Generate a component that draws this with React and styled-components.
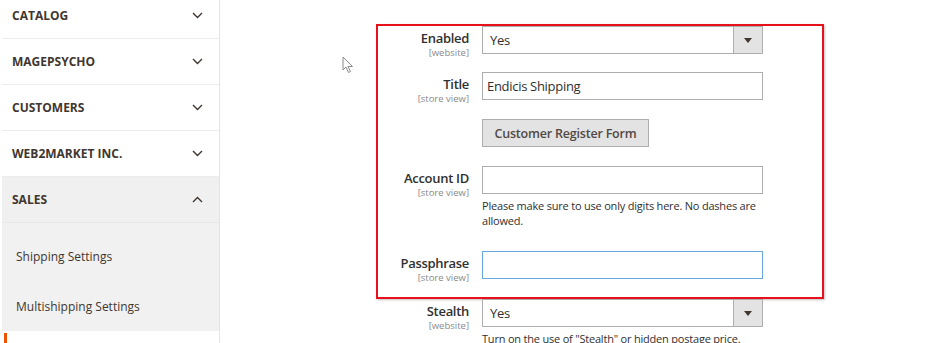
import React from "react"
import styled, { createGlobalStyle } from "styled-components"

const GlobalStyle = createGlobalStyle`
  html, body {
    margin: 0;
    padding: 0;
    background: #fff;
    overflow: hidden;
  }
  body {
    font-family: "Open Sans", "Liberation Sans", sans-serif;
    color: #303030;
  }
`

const Page = styled.div`
  position: relative;
  display: flex;
  width: 935px;
  height: 343px;
  overflow: hidden;
`

const Sidebar = styled.nav`
  width: 217px;
  margin-left: 2px;
  margin-top: -7px;
  border-right: 1px solid #e3e3e3;
  flex-shrink: 0;
`

const Section = styled.div`
  display: flex;
  align-items: center;
  justify-content: space-between;
  height: 45px;
  padding: 0 16px 0 10px;
  border-bottom: 1px solid ${({ $open }) => ($open ? "#e8e8e8" : "#ececec")};
  background: ${({ $open }) => ($open ? "#f0f0f0" : "#fff")};
  font-size: 12px;
  font-weight: 700;
  color: #41362f;
  text-transform: uppercase;
`

const SubMenu = styled.ul`
  list-style: none;
  margin: 0;
  padding: 8px 0 0;
  background: #f1f1f1;
`

const SubItem = styled.li`
  height: 50px;
  display: flex;
  align-items: center;
  padding-left: 14px;
  font-size: 12px;
  color: #41362f;
`

const NextItem = styled.div`
  margin: 2px 0 0 2px;
  height: 40px;
  border-left: 3px solid #eb5202;
`

const Main = styled.main`
  flex: 1;
  padding: 24px 0 0 156px;
`

const Highlight = styled.div`
  width: 444px;
  padding-bottom: 18px;
  border: 2px solid #e8101a;
  box-shadow: 1px 1px 2px rgba(0, 0, 0, 0.25);
`

const Row = styled.div`
  display: grid;
  grid-template-columns: 91px 281px;
  column-gap: 13px;
  align-items: start;
  margin-left: ${({ $outside }) => ($outside ? "2px" : "0")};
  margin-top: ${({ $top }) => $top || 0}px;
`

const Label = styled.div`
  box-sizing: border-box;
  height: 28px;
  text-align: right;
  padding-top: 4px;
`

const LabelText = styled.div`
  font-size: 13px;
  font-weight: 600;
  letter-spacing: -0.3px;
  line-height: 17px;
  color: #303030;
`

const Scope = styled.div`
  font-size: 9.5px;
  line-height: 11px;
  color: #8a8a8a;
`

const Control = styled.div`
  display: flex;
  flex-direction: column;
`

const Input = styled.div`
  box-sizing: border-box;
  height: 28px;
  border: 1px solid ${({ $focus }) => ($focus ? "#68a8e0" : "#adadad")};
  background: #fff;
  display: flex;
  align-items: center;
  padding-left: 4px;
  font-size: 13px;
  letter-spacing: -0.3px;
  color: #303030;
`

const Select = styled(Input)`
  padding-left: 7px;
  justify-content: space-between;
`

const Arrow = styled.span`
  width: 28px;
  height: 100%;
  border-left: 1px solid #adadad;
  background: #e3e3e3;
  display: flex;
  align-items: center;
  justify-content: center;

  &::after {
    content: "";
    border-left: 4px solid transparent;
    border-right: 4px solid transparent;
    border-top: 5px solid #41362f;
  }
`

const Button = styled.button`
  align-self: flex-start;
  box-sizing: border-box;
  width: 167px;
  height: 28px;
  background: #e3e3e3;
  border: 1px solid #adadad;
  font-family: inherit;
  font-size: 12.5px;
  font-weight: 600;
  letter-spacing: -0.2px;
  color: #514943;
  padding: 0;
`

const Note = styled.p`
  margin: 4px 0 0;
  font-size: 11px;
  letter-spacing: -0.2px;
  line-height: 15px;
  color: #303030;
  padding-right: 4px;
`

const Cursor = styled.svg`
  position: absolute;
  left: 342px;
  top: 56px;
`

const Chevron = ({ up }) => (
  <svg width="11" height="7" viewBox="0 0 11 7">
    <path
      d={up ? "M1 6 L5.5 1.5 L10 6" : "M1 1 L5.5 5.5 L10 1"}
      fill="none"
      stroke="#41362f"
      strokeWidth="1.4"
    />
  </svg>
)

const FieldLabel = ({ text, scope }) => (
  <Label>
    <LabelText>{text}</LabelText>
    <Scope>{scope}</Scope>
  </Label>
)

const sections = ["Catalog", "MagePsycho", "Customers", "Web2Market Inc."]

export default function App() {
  return (
    <>
      <GlobalStyle />
      <Page>
        <Sidebar>
          {sections.map((s) => (
            <Section key={s}>
              <span>{s}</span>
              <Chevron />
            </Section>
          ))}
          <Section $open>
            <span>Sales</span>
            <Chevron up />
          </Section>
          <SubMenu>
            <SubItem>Shipping Settings</SubItem>
            <SubItem>Multishipping Settings</SubItem>
          </SubMenu>
          <NextItem />
        </Sidebar>

        <Main>
          <Highlight>
            <Row>
              <FieldLabel text="Enabled" scope="[website]" />
              <Control>
                <Select>
                  <span>Yes</span>
                  <Arrow />
                </Select>
              </Control>
            </Row>
            <Row $top={18}>
              <FieldLabel text="Title" scope="[store view]" />
              <Control>
                <Input>Endicis Shipping</Input>
              </Control>
            </Row>
            <Row $top={19}>
              <div />
              <Control>
                <Button>Customer Register Form</Button>
              </Control>
            </Row>
            <Row $top={19}>
              <FieldLabel text="Account ID" scope="[store view]" />
              <Control>
                <Input />
                <Note>Please make sure to use only digits here. No dashes are allowed.</Note>
              </Control>
            </Row>
            <Row $top={23}>
              <FieldLabel text="Passphrase" scope="[store view]" />
              <Control>
                <Input $focus />
              </Control>
            </Row>
          </Highlight>
          <Row $outside>
            <FieldLabel text="Stealth" scope="[website]" />
            <Control>
              <Select>
                <span>Yes</span>
                <Arrow />
              </Select>
              <Note>Turn on the use of "Stealth" or hidden postage price.</Note>
            </Control>
          </Row>
        </Main>

        <Cursor width="13" height="18" viewBox="0 0 13 18">
          <path
            d="M1 1 L1 14 L4 11 L6.5 16.5 L8.5 15.5 L6 10.5 L10.5 10.5 Z"
            fill="#fff"
            stroke="#8a8a8a"
            strokeWidth="1"
            strokeLinejoin="round"
          />
        </Cursor>
      </Page>
    </>
  )
}
